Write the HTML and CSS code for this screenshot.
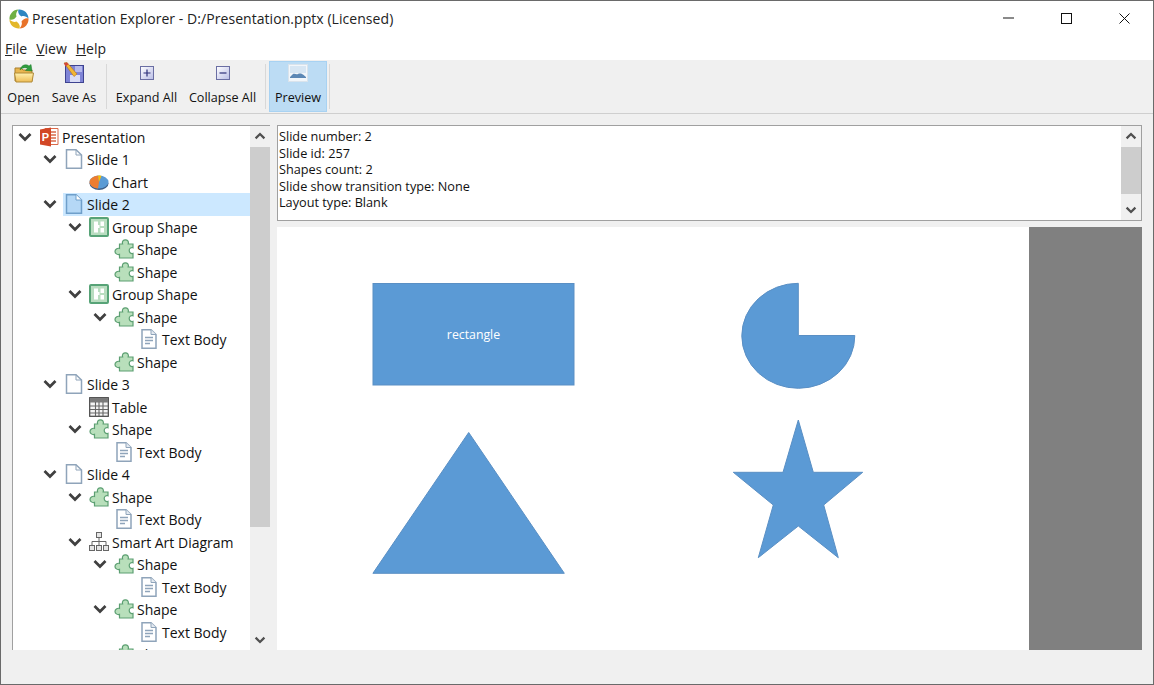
FILE: index.html
```html
<!DOCTYPE html>
<html lang="en">
<head>
<meta charset="utf-8">
<title>Presentation Explorer</title>
<link rel="stylesheet" href="styles.css">
</head>
<body>
<svg class="defs" width="0" height="0" aria-hidden="true">
  <defs>
    <linearGradient id="lav" x1="0" y1="0" x2="1" y2="1"><stop offset="0" stop-color="#ffffff"/><stop offset="1" stop-color="#b9bde6"/></linearGradient>
    <linearGradient id="fold" x1="0" y1="0" x2="0" y2="1"><stop offset="0" stop-color="#fff2b0"/><stop offset="1" stop-color="#eebc55"/></linearGradient>
    <symbol id="chev" viewBox="0 0 14 10"><path d="M1.500 2 L7 7.500 L12.500 2" fill="none" stroke="#404040" stroke-width="2.700"/></symbol>
    <symbol id="ppt" viewBox="0 0 20 20">
      <path d="M6 1.500 H19 V17.500 H6 Z" fill="#fff" stroke="#d9694a"/>
      <path d="M12 5 h5 M12 8 h5 M12 11 h5 M12 14 h5" stroke="#d9694a" stroke-width="1.300"/>
      <path d="M1 2.500 L12 .5 V19.500 L1 17.500 Z" fill="#d24726"/>
      <text x="6.300" y="14.200" class="ppt-p">P</text>
    </symbol>
    <symbol id="page" viewBox="0 0 20 20"><path d="M2.500 .8 H12 L17.500 6 V19.200 H2.500 Z" fill="#fff" stroke="#8fa4ba" stroke-width="1.500"/><path d="M12 .8 V6 H17.500" fill="none" stroke="#8fa4ba"/></symbol>
    <symbol id="page-sel" viewBox="0 0 20 20"><path d="M2.500 .8 H12 L17.500 6 V19.200 H2.500 Z" fill="#b5d8f6" stroke="#6f9fca" stroke-width="1.500"/><path d="M12 .8 V6 H17.500" fill="#fff" stroke="#6f9fca"/></symbol>
    <symbol id="chart" viewBox="0 0 20 20">
      <ellipse cx="10" cy="11.500" rx="9.500" ry="6.500" fill="#3f5f88"/>
      <ellipse cx="10" cy="10" rx="9.500" ry="6.500" fill="#5b9bd5"/>
      <path d="M10 10 L9 3.600 A9.500 6.500 0 0 0 1 12 A9.500 6.500 0 0 0 9 16.400 Z" fill="#ed7d31"/>
      <path d="M10 10 L9 3.600 A9.500 6.500 0 0 1 12.500 3.700 Z" fill="#ffc000"/>
    </symbol>
    <symbol id="group" viewBox="0 0 20 20">
      <rect x="1" y="1" width="18" height="18" rx="1" fill="#b9ddc0" stroke="#57a377" stroke-width="2"/>
      <path d="M5 4.500 H9 V8 H10.500 V11 H9 V15.500 H5 Z M11.500 4.500 H15 V9 H11.500 Z M11.500 11 H15 V15.500 H11.500 Z" fill="#fff"/>
    </symbol>
    <symbol id="puzzle" viewBox="0 0 20 20"><path d="M5.500 5 H8.600 C7.800 2.500 9.400 .8 11.400 .8 S15 2.500 14.200 5 H19 V8.800 C17 8 15.200 9.600 15.200 11.600 S17 15.200 19 14.400 V19 H5.500 V15.400 C3.200 16 1 14.400 1 12.400 S3.200 8.800 5.500 9.400 Z" fill="#b8dfbb" stroke="#5c9f72" stroke-width="1.200"/></symbol>
    <symbol id="textbody" viewBox="0 0 20 20">
      <path d="M3 .8 H12 L17 5.500 V19.200 H3 Z" fill="#fff" stroke="#8fa4ba" stroke-width="1.500"/><path d="M12 .8 V5.500 H17" fill="#e4eaf1" stroke="#8fa4ba"/>
      <path d="M6 8.500 H14 M6 11.500 H14 M6 14.500 H11" stroke="#8fa4ba" stroke-width="1.300"/>
    </symbol>
    <symbol id="table" viewBox="0 0 20 20">
      <rect x=".7" y=".7" width="18.600" height="18.600" fill="#f4f4f4" stroke="#444" stroke-width="1.200"/>
      <rect x="1" y="1" width="18" height="4.500" fill="#7a7a7a"/>
      <path d="M1 9 H19 M1 12.500 H19 M1 16 H19 M6.500 5 V19 M10 5 V19 M14 5 V19" stroke="#666" stroke-width="1.100" fill="none"/>
    </symbol>
    <symbol id="smart" viewBox="0 0 20 20">
      <g fill="#e6e6e6" stroke="#666"><rect x="7.500" y=".5" width="5" height="5"/><rect x=".5" y="13.500" width="5" height="5"/><rect x="7.500" y="13.500" width="5" height="5"/><rect x="14.500" y="13.500" width="5" height="5"/></g>
      <path d="M10 5.500 V13.500 M3 13.500 V9.500 H17 V13.500" fill="none" stroke="#666"/>
    </symbol>
    <symbol id="plus" viewBox="0 0 14 14"><rect x=".5" y=".5" width="13" height="13" fill="url(#lav)" stroke="#6a6ea3"/><path d="M3.500 7 H10.500 M7 3.500 V10.500" stroke="#2c2f7a" stroke-width="1.200"/></symbol>
    <symbol id="minus" viewBox="0 0 14 14"><rect x=".5" y=".5" width="13" height="13" fill="url(#lav)" stroke="#6a6ea3"/><path d="M3.500 7 H10.500" stroke="#2c2f7a" stroke-width="1.200"/></symbol>
    <path id="arm" d="M9.500 .5 C14.500 0 19.500 4 19.500 9.500 C17.500 7.500 14.500 6.500 12.500 7.500 C10 6 8.500 3 9.500 .5 Z"/>
  </defs>
</svg>

<div class="window">
  <header class="titlebar">
    <svg class="app-logo" viewBox="0 0 20 20" width="20" height="20">
      <use href="#arm" fill="#2e86c1"/>
      <use href="#arm" fill="#e8732a" transform="rotate(90 10 10)"/>
      <use href="#arm" fill="#e3b72b" transform="rotate(180 10 10)"/>
      <use href="#arm" fill="#6fb044" transform="rotate(270 10 10)"/>
    </svg>
    <span class="title-text">Presentation Explorer - D:/Presentation.pptx (Licensed)</span>
    <div class="win-controls">
      <span class="win-btn"><span class="win-min"></span></span>
      <span class="win-btn"><span class="win-max"></span></span>
      <span class="win-btn"><svg width="11" height="11" viewBox="0 0 11 11"><path d="M.5 .5 L10.500 10.500 M10.500 .5 L.5 10.500" stroke="#111" fill="none"/></svg></span>
    </div>
  </header>

  <nav class="menubar">
    <span class="menu-item"><u>F</u>ile</span>
    <span class="menu-item"><u>V</u>iew</span>
    <span class="menu-item"><u>H</u>elp</span>
  </nav>

  <div class="toolbar">
    <button class="tool tool-open">
      <svg class="tool-icon" width="22" height="22" viewBox="0 0 22 22">
        <path d="M2 6 H8 L10 8 H19 V19 H2 Z" fill="#e9b64f" stroke="#a97f2c"/>
        <path d="M1.500 11 H20.500 L19 20 H3 Z" fill="url(#fold)" stroke="#b08a38"/>
        <path d="M7 8 C8 3 13 1.500 16 4 L18 2.500 L19 9 L12.500 8.500 L14.500 6.500 C12.500 5 9.500 5.500 7 8 Z" fill="#2f9c3f" stroke="#1f7a2d" stroke-width=".5"/>
      </svg>
      <span>Open</span>
    </button>
    <button class="tool tool-save">
      <svg class="tool-icon" width="22" height="22" viewBox="0 0 22 22">
        <rect x="2.500" y="3.500" width="18" height="17" fill="#7f84d6" stroke="#3e4390"/>
        <rect x="7" y="13" width="10" height="7" fill="#d9dcf5"/>
        <rect x="12" y="4" width="7" height="6" fill="#b5b9ec"/>
        <path d="M1 1 L4 .5 L14 12 L11 14.500 Z" fill="#f2b632" stroke="#b5721b" stroke-width=".6"/>
        <path d="M1 1 L4 .5 L5.500 2.300 L2.300 4.500 Z" fill="#d2463a"/>
      </svg>
      <span>Save As</span>
    </button>
    <span class="tool-sep"></span>
    <button class="tool tool-expand">
      <svg class="tool-icon" width="14" height="14"><use href="#plus"/></svg>
      <span>Expand All</span>
    </button>
    <button class="tool tool-collapse">
      <svg class="tool-icon" width="14" height="14"><use href="#minus"/></svg>
      <span>Collapse All</span>
    </button>
    <span class="tool-sep"></span>
    <button class="tool tool-preview">
      <svg class="tool-icon" width="20" height="18" viewBox="0 0 20 18">
        <rect x=".5" y=".5" width="19" height="17" fill="#f2f6fa" stroke="#d9e3ec"/>
        <rect x="2" y="2" width="16" height="7" fill="#d7e6f3"/>
        <path d="M2 13 L5 10 C7 9 8 11 10 10 C12 9 14 10 15 10.500 L18 13 V14 H2 Z" fill="#5d88b5"/>
      </svg>
      <span>Preview</span>
    </button>
    <span class="tool-sep tool-sep-last"></span>
  </div>

  <main class="workspace">
    <section class="tree-panel">
      <ul class="tree">
        <li class="row d0"><span class="chev"><svg width="14" height="10"><use href="#chev"/></svg></span><span class="node"><svg class="ico" width="20" height="20"><use href="#ppt"/></svg>Presentation</span></li>
        <li class="row d1"><span class="chev"><svg width="14" height="10"><use href="#chev"/></svg></span><span class="node"><svg class="ico" width="20" height="20"><use href="#page"/></svg>Slide 1</span></li>
        <li class="row d2"><span class="chev"></span><span class="node"><svg class="ico" width="20" height="20"><use href="#chart"/></svg>Chart</span></li>
        <li class="row d1"><span class="chev"><svg width="14" height="10"><use href="#chev"/></svg></span><span class="node selected"><svg class="ico" width="20" height="20"><use href="#page-sel"/></svg>Slide 2</span></li>
        <li class="row d2"><span class="chev"><svg width="14" height="10"><use href="#chev"/></svg></span><span class="node"><svg class="ico" width="20" height="20"><use href="#group"/></svg>Group Shape</span></li>
        <li class="row d3"><span class="chev"></span><span class="node"><svg class="ico" width="20" height="20"><use href="#puzzle"/></svg>Shape</span></li>
        <li class="row d3"><span class="chev"></span><span class="node"><svg class="ico" width="20" height="20"><use href="#puzzle"/></svg>Shape</span></li>
        <li class="row d2"><span class="chev"><svg width="14" height="10"><use href="#chev"/></svg></span><span class="node"><svg class="ico" width="20" height="20"><use href="#group"/></svg>Group Shape</span></li>
        <li class="row d3"><span class="chev"><svg width="14" height="10"><use href="#chev"/></svg></span><span class="node"><svg class="ico" width="20" height="20"><use href="#puzzle"/></svg>Shape</span></li>
        <li class="row d4"><span class="chev"></span><span class="node"><svg class="ico" width="20" height="20"><use href="#textbody"/></svg>Text Body</span></li>
        <li class="row d3"><span class="chev"></span><span class="node"><svg class="ico" width="20" height="20"><use href="#puzzle"/></svg>Shape</span></li>
        <li class="row d1"><span class="chev"><svg width="14" height="10"><use href="#chev"/></svg></span><span class="node"><svg class="ico" width="20" height="20"><use href="#page"/></svg>Slide 3</span></li>
        <li class="row d2"><span class="chev"></span><span class="node"><svg class="ico" width="20" height="20"><use href="#table"/></svg>Table</span></li>
        <li class="row d2"><span class="chev"><svg width="14" height="10"><use href="#chev"/></svg></span><span class="node"><svg class="ico" width="20" height="20"><use href="#puzzle"/></svg>Shape</span></li>
        <li class="row d3"><span class="chev"></span><span class="node"><svg class="ico" width="20" height="20"><use href="#textbody"/></svg>Text Body</span></li>
        <li class="row d1"><span class="chev"><svg width="14" height="10"><use href="#chev"/></svg></span><span class="node"><svg class="ico" width="20" height="20"><use href="#page"/></svg>Slide 4</span></li>
        <li class="row d2"><span class="chev"><svg width="14" height="10"><use href="#chev"/></svg></span><span class="node"><svg class="ico" width="20" height="20"><use href="#puzzle"/></svg>Shape</span></li>
        <li class="row d3"><span class="chev"></span><span class="node"><svg class="ico" width="20" height="20"><use href="#textbody"/></svg>Text Body</span></li>
        <li class="row d2"><span class="chev"><svg width="14" height="10"><use href="#chev"/></svg></span><span class="node"><svg class="ico" width="20" height="20"><use href="#smart"/></svg>Smart Art Diagram</span></li>
        <li class="row d3"><span class="chev"><svg width="14" height="10"><use href="#chev"/></svg></span><span class="node"><svg class="ico" width="20" height="20"><use href="#puzzle"/></svg>Shape</span></li>
        <li class="row d4"><span class="chev"></span><span class="node"><svg class="ico" width="20" height="20"><use href="#textbody"/></svg>Text Body</span></li>
        <li class="row d3"><span class="chev"><svg width="14" height="10"><use href="#chev"/></svg></span><span class="node"><svg class="ico" width="20" height="20"><use href="#puzzle"/></svg>Shape</span></li>
        <li class="row d4"><span class="chev"></span><span class="node"><svg class="ico" width="20" height="20"><use href="#textbody"/></svg>Text Body</span></li>
        <li class="row d3"><span class="chev"></span><span class="node"><svg class="ico" width="20" height="20"><use href="#puzzle"/></svg>Shape</span></li>
      </ul>
      <div class="scrollbar">
        <span class="sb-btn sb-up"><svg width="12" height="8" viewBox="0 0 14 10"><path d="M1.500 8 L7 2.500 L12.500 8" fill="none" stroke="#505050" stroke-width="2.800"/></svg></span>
        <span class="sb-thumb tree-thumb"></span>
        <span class="sb-track"></span>
        <span class="sb-btn"><svg width="12" height="8" viewBox="0 0 14 10"><path d="M1.500 2 L7 7.500 L12.500 2" fill="none" stroke="#505050" stroke-width="2.800"/></svg></span>
      </div>
    </section>

    <div class="detail">
      <section class="info">
        <div class="info-text">
          <div>Slide number: 2</div>
          <div>Slide id: 257</div>
          <div>Shapes count: 2</div>
          <div>Slide show transition type: None</div>
          <div>Layout type: Blank</div>
        </div>
        <div class="scrollbar">
          <span class="sb-btn sb-up"><svg width="12" height="8" viewBox="0 0 14 10"><path d="M1.500 8 L7 2.500 L12.500 8" fill="none" stroke="#505050" stroke-width="2.800"/></svg></span>
          <span class="sb-thumb info-thumb"></span>
          <span class="sb-track"></span>
          <span class="sb-btn"><svg width="12" height="8" viewBox="0 0 14 10"><path d="M1.500 2 L7 7.500 L12.500 2" fill="none" stroke="#505050" stroke-width="2.800"/></svg></span>
        </div>
      </section>
      <section class="preview">
        <svg class="slide" viewBox="277 227 752 423" width="752" height="423">
          <g fill="#5b9ad5" stroke="#5a8fc4" stroke-width="1">
            <rect x="373" y="283.500" width="201" height="101.500"/>
            <path d="M798.300 335.500 V283.300 A56.500 52.500 0 1 0 854.800 335.500 Z"/>
            <polygon points="468.700,432.500 564.300,573.300 372.900,573.300"/>
            <polygon points="798.300,420 813.300,472.300 862.700,472.300 823.700,505 838.300,557.700 798.300,526 758.300,557.700 773.300,505 733.300,472.300 783,472.300"/>
          </g>
          <text x="473.500" y="339" class="shape-label">rectangle</text>
        </svg>
        <div class="slide-margin"></div>
      </section>
    </div>
  </main>
</div>
</body>
</html>
```

FILE: styles.css
```css
* { box-sizing: border-box; }
html, body { margin: 0; height: 100%; background: #f0f0f0; overflow: hidden; }
body { font-family: "Open Sans", "Noto Sans", sans-serif; font-size: 14px; color: #000; }
.defs { position: absolute; }
.ppt-p { font: bold 11px "Liberation Sans", sans-serif; fill: #fff; text-anchor: middle; }

.window {
  width: 1154px; height: 685px;
  display: flex; flex-direction: column;
  border: 1px solid #6a6a6a;
  background: #f0f0f0;
}

.titlebar { height: 36px; background: #fff; display: flex; align-items: center; padding-left: 8px; flex: none; }
.app-logo { flex: none; margin-top: -1px; }
.title-text { margin-left: 3px; margin-bottom: 2px; font-size: 14px; letter-spacing: .055px; color: #222; }
.win-controls { margin-left: auto; display: flex; align-self: stretch; }
.win-btn { width: 58px; display: flex; align-items: center; justify-content: center; margin-top: -2px; }
.win-min { width: 11px; height: 2px; background: #8a8a8a; }
.win-max { width: 11px; height: 11px; border: 1px solid #111; }

.menubar { height: 23px; background: #fff; display: flex; align-items: center; gap: 9px; padding-left: 4px; flex: none; }
.menu-item { font-size: 14px; color: #222; }

.toolbar { height: 54px; background: #f0f0f0; border-bottom: 1px solid #cfcfcf; display: flex; align-items: stretch; padding: 1px 0 1px 1px; flex: none; }
.tool {
  appearance: none; border: 1px solid transparent; background: none; padding: 0; margin: 0;
  font: inherit; color: #111;
  display: flex; flex-direction: column; align-items: center; justify-content: flex-start;
  white-space: nowrap;
}
.tool-icon { height: 22px; flex: none; }
.tool span { margin-top: 3px; line-height: 22px; font-size: 12.6px; }
.tool-open { width: 43px; }
.tool-save { width: 58px; }
.tool-expand { width: 73px; }
.tool-collapse { width: 79px; }
.tool-preview { width: 58px; background: #bcdcf4; border-color: #a8d2f2; }
.tool-sep { width: 1px; background: #d8d8d8; margin: 3px; flex: none; }
.tool-sep-last { margin-left: 2px; }

.workspace { flex: 1; min-height: 0; display: flex; gap: 7px; padding: 11px 11px 34px 11px; }

.tree-panel { width: 258px; flex: none; display: flex; border-top: 1px solid #a0a0a0; border-left: 1px solid #a0a0a0; background: #fff; overflow: hidden; }
.tree { list-style: none; margin: -.5px 0 0; padding: 0; flex: 1; min-width: 0; overflow: hidden; }
.row { height: 22.5px; display: flex; align-items: stretch; }
.d0 { padding-left: 0; }
.d1 { padding-left: 25px; }
.d2 { padding-left: 50px; }
.d3 { padding-left: 75px; }
.d4 { padding-left: 100px; }
.chev { width: 25px; flex: none; display: flex; align-items: center; justify-content: center; padding-right: 2px; }
.node { flex: 1; display: flex; align-items: center; white-space: nowrap; color: #111; padding-top: 1px; }
.node.selected { background: #cce8ff; }
.ico { flex: none; margin: 0 3px 1px 1px; width: 20px; height: 20px; }

.scrollbar { width: 20px; flex: none; display: flex; flex-direction: column; background: #f0f0f0; }
.sb-btn { height: 21px; flex: none; display: flex; align-items: center; justify-content: center; }
.sb-up { padding-bottom: 2px; }
.sb-thumb { background: #cdcdcd; flex: none; }
.sb-track { flex: 1; }
.tree-thumb { height: 380px; }
.info-thumb { height: 47px; }

.detail { flex: 1; min-width: 0; display: flex; flex-direction: column; gap: 6px; }
.info { height: 96px; flex: none; display: flex; border: 1px solid #a0a0a0; background: #fff; }
.info-text { flex: 1; padding: 2px 0 0 1px; font-size: 12.7px; line-height: 16.5px; color: #111; }
.preview { flex: 1; min-height: 0; display: flex; }
.slide { display: block; flex: none; background: #fff; }
.slide-margin { flex: 1; background: #808080; }
.shape-label { font: 12.3px "Open Sans", sans-serif; fill: #fff; text-anchor: middle; }
```
